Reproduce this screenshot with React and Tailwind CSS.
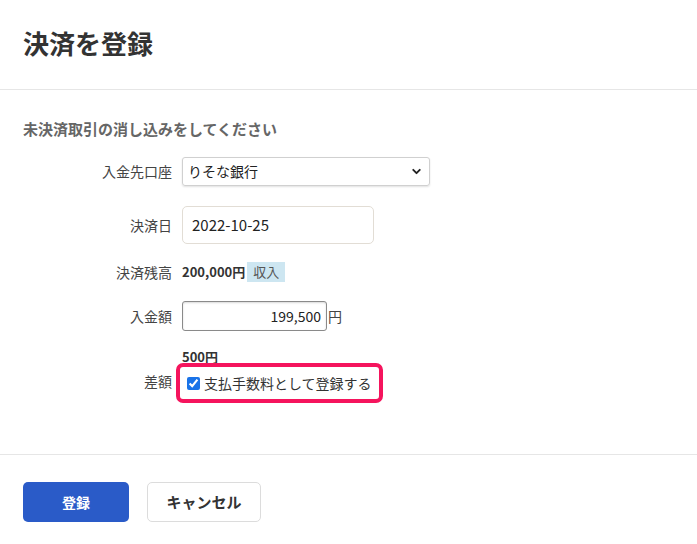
import React from "react";
import { ChevronDown } from "lucide-react";

const font = { fontFamily: '"Noto Sans CJK JP", "Noto Sans", sans-serif' };

function Row({ label, children, className = "" }) {
  return (
    <div className={`flex items-center ${className}`}>
      <div className="w-[149px] shrink-0 pr-0 text-right text-[14px] text-[#444]">{label}</div>
      <div className="ml-[10px] flex items-center">{children}</div>
    </div>
  );
}

export default function App() {
  return (
    <div className="w-[697px] h-[544px] bg-white text-[#333]" style={font}>
      {/* header */}
      <div className="h-[90px] flex items-center px-[23px] border-b border-[#e6e6e6]">
        <h1 className="text-[26px] font-bold leading-none text-[#333] -mt-[4px]">決済を登録</h1>
      </div>

      {/* body */}
      <div className="h-[365px] px-[23px] pt-[29px] border-b border-[#e6e6e6]">
        <h2 className="text-[15px] font-bold text-[#666] leading-[20px]">未決済取引の消し込みをしてください</h2>

        <Row label="入金先口座" className="mt-[18px] h-[29px]">
          <div className="w-[248px] h-[29px] flex items-center justify-between pl-[5px] pr-[6px] border border-[#d0d0d0] rounded-[3px] shadow-[0_1px_2px_rgba(0,0,0,0.12)] text-[14px] text-[#222]">
            <span>りそな銀行</span>
            <ChevronDown size={13} strokeWidth={3.5} className="text-[#222]" />
          </div>
        </Row>

        <Row label="決済日" className="mt-[20px] h-[38px]">
          <div className="w-[192px] h-[38px] flex items-center pl-[9px] border border-[#e2ddd5] rounded-[5px] text-[15px] text-[#222]">
            2022-10-25
          </div>
        </Row>

        <Row label="決済残高" className="mt-[18px] h-[20px]">
          <span className="text-[13px] font-bold text-[#333]">200,000円</span>
          <span className="ml-[2px] h-[20px] px-[6px] flex items-center bg-[#cde6f1] text-[13px] text-[#555]">収入</span>
        </Row>

        <Row label="入金額" className="mt-[19px] h-[30px]">
          <div className="w-[145px] h-[30px] flex items-center justify-end pr-[5px] border border-[#8a8a8a] rounded-[3px] shadow-[inset_0_1px_2px_rgba(0,0,0,0.15)] text-[14px] text-[#222]">
            199,500
          </div>
          <span className="ml-[1px] text-[14px] text-[#444]">円</span>
        </Row>

        <div className="mt-[19px] flex">
          <div className="w-[149px] shrink-0 pt-[21px] text-right text-[14px] text-[#444]">差額</div>
          <div className="ml-[4px] flex flex-col">
            <span className="ml-[6px] text-[13px] font-bold leading-[14px] text-[#333]">500円</span>
            <label className="mt-[-1px] h-[40px] flex items-center gap-[4px] px-[7px] border-[4px] border-[#f5145d] rounded-[7px] text-[14px] text-[#333]">
              <input type="checkbox" defaultChecked className="w-[13px] h-[13px] accent-[#1a73e8]" />
              <span>支払手数料として登録する</span>
            </label>
          </div>
        </div>
      </div>

      {/* footer */}
      <div className="px-[23px] pt-[27px] flex gap-[18px]">
        <button className="w-[106px] h-[40px] rounded-[5px] bg-[#2a5bc8] text-white text-[14px] font-bold">登録</button>
        <button className="w-[114px] h-[40px] rounded-[5px] border border-[#dcdcdc] bg-white text-[#333] text-[15px] font-bold">キャンセル</button>
      </div>
    </div>
  );
}
